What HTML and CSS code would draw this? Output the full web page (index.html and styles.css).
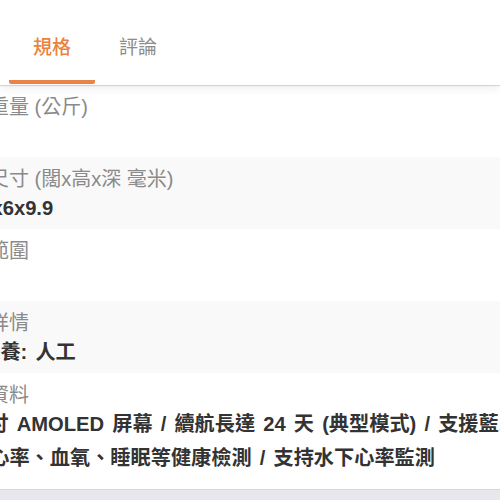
FILE: index.html
```html
<!DOCTYPE html>
<html lang="zh-Hant">
<head>
<meta charset="utf-8">
<title>規格</title>
<link rel="stylesheet" href="styles.css">
</head>
<body>
<div class="page">
  <nav class="tabs">
    <div class="tab tab-active">規格</div>
    <div class="tab">評論</div>
  </nav>
  <div class="specs">
    <div class="row">
      <div class="label">淨重量 (公斤)</div>
      <div class="value">30</div>
    </div>
    <div class="row row-alt">
      <div class="label">錶尺寸 (闊x高x深 毫米)</div>
      <div class="value">46x6x9.9</div>
    </div>
    <div class="row">
      <div class="label">錶範圍</div>
      <div class="value">無</div>
    </div>
    <div class="row row-alt">
      <div class="label">材詳情</div>
      <div class="value">1保養: 人工</div>
    </div>
    <div class="row row-last">
      <div class="label">錶資料</div>
      <div class="value">1 吋 AMOLED 屏幕 / 續航長達 24 天 (典型模式) / 支援藍牙通話<br>及心率、血氧、睡眠等健康檢測 / 支持水下心率監測</div>
    </div>
  </div>
  <div class="bottom-bar"></div>
</div>
</body>
</html>
```
FILE: styles.css
```css
html, body {
  margin: 0;
  padding: 0;
  background: #ffffff;
}

body {
  font-family: "Liberation Sans", "Noto Sans CJK TC", sans-serif;
}

.page {
  width: 500px;
  height: 500px;
  overflow: hidden;
  display: flex;
  flex-direction: column;
}

.tabs {
  position: relative;
  z-index: 2;
  flex: 0 0 auto;
  height: 85px;
  box-sizing: border-box;
  display: flex;
  padding-left: 9px;
  background: #ffffff;
  box-shadow: 0 1px 1px rgba(0, 0, 0, 0.13), 0 3px 9px rgba(0, 0, 0, 0.07);
}

.tab {
  width: 86px;
  height: 84px;
  box-sizing: border-box;
  padding-top: 36px;
  text-align: center;
  font-size: 19px;
  line-height: 24px;
  color: #8c8c8c;
}

.tab-active {
  color: #e8843f;
  font-weight: 500;
  border-bottom: 4px solid #e8844a;
  border-radius: 0 0 2px 2px;
}

.specs {
  flex: 1 1 auto;
  display: flex;
  flex-direction: column;
  margin-left: -31px;
  white-space: nowrap;
}

.row {
  padding: 10px 0 4px;
  background: #ffffff;
}

.row-alt {
  background: #f9f9f9;
}

.row-last {
  flex: 1 1 auto;
}

.label {
  font-size: 20px;
  line-height: 24px;
  color: #8a8a8a;
}

.value {
  font-size: 20.2px;
  line-height: 34px;
  font-weight: 700;
  word-spacing: 2.5px;
  color: #333333;
}

.bottom-bar {
  flex: 0 0 10px;
  background: #e7e8ee;
  border-top: 1px solid #d6d8df;
}
```
